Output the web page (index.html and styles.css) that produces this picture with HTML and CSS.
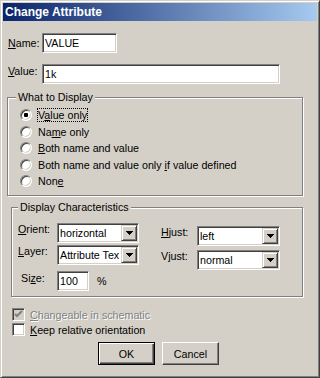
FILE: index.html
```html
<!DOCTYPE html>
<html lang="en">
<head>
    <meta charset="UTF-8">
    <title>Change Attribute</title>
    <link rel="stylesheet" href="styles.css">
</head>
<body>
    <div class="dialog">
        <div class="title-bar">Change Attribute</div>
        <div class="dialog-body">
            <div class="field-row name-row">
                <label class="field-label"><u>N</u>ame:</label>
                <div class="textbox name-box">VALUE</div>
            </div>
            <div class="field-row value-row">
                <label class="field-label"><u>V</u>alue:</label>
                <div class="textbox value-box">1k</div>
            </div>

            <div class="group display-group">
                <span class="group-title">What to Display</span>
                <div class="radio-row"><span class="radio checked"></span><span class="option-text focused">V<u>a</u>lue only</span></div>
                <div class="radio-row"><span class="radio"></span><span class="option-text">Na<u>m</u>e only</span></div>
                <div class="radio-row"><span class="radio"></span><span class="option-text"><u>B</u>oth name and value</span></div>
                <div class="radio-row"><span class="radio"></span><span class="option-text">Both name and value only <u>i</u>f value defined</span></div>
                <div class="radio-row"><span class="radio"></span><span class="option-text">Non<u>e</u></span></div>
            </div>

            <div class="group chars-group">
                <span class="group-title">Display Characteristics</span>
                <div class="chars-col left-col">
                    <div class="chars-row">
                        <label class="chars-label"><u>O</u>rient:</label>
                        <div class="combo combo-left">
                            <span class="combo-text">horizontal</span>
                            <span class="combo-btn"><svg width="7" height="4" viewBox="0 0 7 4"><path d="M0 0h7L3.5 4z" fill="#000"/></svg></span>
                        </div>
                    </div>
                    <div class="chars-row layer-row">
                        <label class="chars-label"><u>L</u>ayer:</label>
                        <div class="combo combo-left">
                            <span class="combo-text">Attribute Tex</span>
                            <span class="combo-btn"><svg width="7" height="4" viewBox="0 0 7 4"><path d="M0 0h7L3.5 4z" fill="#000"/></svg></span>
                        </div>
                    </div>
                    <div class="chars-row size-row">
                        <label class="chars-label size-label">Si<u>z</u>e:</label>
                        <div class="textbox size-box">100</div>
                        <span class="unit">%</span>
                    </div>
                </div>
                <div class="chars-col right-col">
                    <div class="chars-row">
                        <label class="chars-label just-label"><u>H</u>just:</label>
                        <div class="combo combo-right">
                            <span class="combo-text">left</span>
                            <span class="combo-btn"><svg width="7" height="4" viewBox="0 0 7 4"><path d="M0 0h7L3.5 4z" fill="#000"/></svg></span>
                        </div>
                    </div>
                    <div class="chars-row vjust-row">
                        <label class="chars-label just-label">Vjust:</label>
                        <div class="combo combo-right">
                            <span class="combo-text">normal</span>
                            <span class="combo-btn"><svg width="7" height="4" viewBox="0 0 7 4"><path d="M0 0h7L3.5 4z" fill="#000"/></svg></span>
                        </div>
                    </div>
                </div>
            </div>

            <div class="checks">
                <div class="check-row disabled">
                    <span class="checkbox"><svg width="11" height="11" viewBox="0 0 11 11"><path d="M2 5l2 2 5-5" fill="none" stroke="#808080" stroke-width="2"/></svg></span>
                    <span><u>C</u>hangeable in schematic</span>
                </div>
                <div class="check-row">
                    <span class="checkbox"></span>
                    <span><u>K</u>eep relative orientation</span>
                </div>
            </div>

            <div class="buttons">
                <button class="button default-button">OK</button>
                <button class="button">Cancel</button>
            </div>
        </div>
    </div>
</body>
</html>
```

FILE: styles.css
```css
* {
    box-sizing: border-box;
}

body {
    margin: 0;
    font-family: "Liberation Sans", Arial, sans-serif;
    font-size: 10.7px;
    color: #000;
    background: #d4d0c8;
}

/* window frame */
.dialog {
    width: 320px;
    height: 378px;
    background: #d4d0c8;
    border: 1px solid;
    border-color: #d4d0c8 #404040 #404040 #d4d0c8;
    box-shadow: inset 1px 1px #fff, inset -1px -1px #808080;
    padding: 2px;
}

.title-bar {
    height: 18px;
    background: linear-gradient(to right, #0a246a, #a6caf0);
    color: #fff;
    font-weight: bold;
    font-size: 12px;
    line-height: 18px;
    padding-left: 2px;
}

.dialog-body {
    display: flex;
    flex-direction: column;
    align-items: flex-start;
}

/* name / value */
.field-row {
    display: flex;
    align-items: flex-start;
    padding-left: 5px;
}

.name-row {
    margin-top: 12px;
}

.value-row {
    margin-top: 11px;
}

.field-label {
    width: 34px;
    line-height: 13px;
}

.name-row .field-label {
    padding-top: 4px;
}

.value-row .field-label {
    padding-top: 1px;
}

.textbox {
    height: 20px;
    background: #fff;
    border: 1px solid;
    border-color: #808080 #fff #fff #808080;
    box-shadow: inset 1px 1px #404040, inset -1px -1px #d4d0c8;
    padding: 0 2px;
    line-height: 18px;
    white-space: nowrap;
}

.name-box {
    width: 75px;
}

.value-box {
    width: 238px;
}

/* group boxes */
.group {
    position: relative;
    border: 1px solid #808080;
    box-shadow: inset 1px 1px #fff, 1px 1px #fff;
}

.group-title {
    position: absolute;
    top: -7px;
    padding: 0 2px;
    background: #d4d0c8;
    line-height: 13px;
    white-space: nowrap;
}

.display-group {
    margin: 13px 0 0 4px;
    width: 296px;
    height: 99px;
    padding: 9px 0 0 12px;
}

.display-group .group-title {
    left: 8px;
}

.radio-row {
    display: flex;
    align-items: center;
    height: 16.5px;
}

.radio {
    width: 12px;
    height: 12px;
    border-radius: 50%;
    border: 1px solid;
    border-color: #808080 #fff #fff #808080;
    box-shadow: inset 1px 1px #404040, inset -1px -1px #d4d0c8;
    background: #fff;
    margin-right: 5px;
    display: flex;
    align-items: center;
    justify-content: center;
}

.radio.checked::after {
    content: "";
    width: 4px;
    height: 4px;
    background: #000;
    border-radius: 1px;
}

.option-text {
    border: 1px dotted transparent;
    line-height: 12px;
    white-space: nowrap;
}

.option-text.focused {
    border-color: #000;
}

.chars-group {
    margin: 11px 0 0 8px;
    width: 292px;
    height: 90px;
    display: flex;
}

.chars-group .group-title {
    left: 6px;
}

.chars-col {
    display: flex;
    flex-direction: column;
}

.left-col {
    width: 143px;
    padding: 15px 0 0 6px;
}

.right-col {
    padding: 18px 0 0 6px;
}

.chars-row {
    display: flex;
    align-items: flex-start;
}

.layer-row {
    margin-top: 2px;
}

.size-row {
    margin-top: 6px;
}

.vjust-row {
    margin-top: 4px;
}

.chars-label {
    width: 39px;
    line-height: 13px;
}

.size-label {
    padding: 1px 0 0 3px;
}

.just-label {
    width: 36px;
}

.combo {
    display: flex;
    height: 20px;
    background: #fff;
    border: 1px solid;
    border-color: #808080 #fff #fff #808080;
    box-shadow: inset 1px 1px #404040, inset -1px -1px #d4d0c8;
    padding: 1px;
}

.combo-left {
    width: 82px;
}

.combo-right {
    width: 83px;
}

.combo-text {
    flex: 1;
    overflow: hidden;
    white-space: nowrap;
    padding-left: 1px;
    line-height: 16px;
}

.combo-btn {
    flex: none;
    width: 16px;
    height: 16px;
    background: #d4d0c8;
    border: 1px solid;
    border-color: #d4d0c8 #404040 #404040 #d4d0c8;
    box-shadow: inset 1px 1px #fff, inset -1px -1px #808080;
    display: flex;
    align-items: center;
    justify-content: center;
}

.combo-btn svg {
    display: block;
    shape-rendering: crispEdges;
}

.size-box {
    width: 32px;
}

.unit {
    align-self: center;
    margin-left: 8px;
}

/* check boxes */
.checks {
    margin: 10px 0 0 9px;
}

.check-row {
    display: flex;
    align-items: center;
    height: 15px;
    white-space: nowrap;
}

.checkbox {
    width: 13px;
    height: 13px;
    border: 1px solid;
    border-color: #808080 #fff #fff #808080;
    box-shadow: inset 1px 1px #404040, inset -1px -1px #d4d0c8;
    background: #fff;
    margin-right: 5px;
}

.checkbox svg {
    display: block;
}

.check-row.disabled {
    color: #808080;
    text-shadow: 1px 1px #fff;
}

.check-row.disabled .checkbox {
    background: #d4d0c8;
}

/* buttons */
.buttons {
    display: flex;
    gap: 7px;
    margin: 5px 0 0 95px;
}

.button {
    width: 57px;
    height: 23px;
    padding: 0;
    font: inherit;
    color: #000;
    background: #d4d0c8;
    border: 1px solid;
    border-color: #fff #404040 #404040 #fff;
    box-shadow: inset -1px -1px #808080;
}

.default-button {
    border-color: #000;
    box-shadow: inset 1px 1px #fff, inset -1px -1px #404040, inset -2px -2px #808080;
}
```
